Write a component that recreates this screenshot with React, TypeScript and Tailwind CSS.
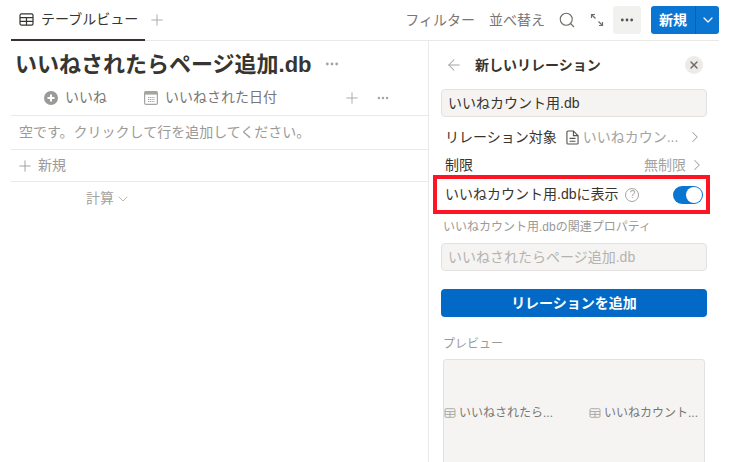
import { ArrowLeft, ChevronDown, ChevronRight, MoreHorizontal, Plus, Search, X } from "lucide-react";

const FONT = { fontFamily: '"Liberation Sans", "Noto Sans CJK JP", sans-serif' };

/* Notion's table icon */
function TableIcon({ className }: { className: string }) {
  return (
    <svg viewBox="0 0 16 14" fill="none" stroke="currentColor" strokeWidth="1.3" className={className}>
      <rect x="1" y="1" width="14" height="12" rx="1.5" />
      <path d="M1 5h14M1 9h14M8 5v8" />
    </svg>
  );
}

function ExpandIcon() {
  return (
    <svg viewBox="0 0 14 14" fill="none" stroke="#6f6e69" strokeWidth="1.2" className="w-[14px] h-[14px]">
      <path d="M1.5 5V1.5H5M1.5 1.5l4 4M12.5 9v3.5H9M12.5 12.5l-4-4" />
    </svg>
  );
}

function CalendarIcon() {
  return (
    <svg viewBox="0 0 14 14" className="w-[14px] h-[14px]">
      <rect x="0.6" y="0.6" width="12.8" height="12.8" rx="1.5" fill="none" stroke="#a5a4a0" strokeWidth="1.2" />
      <rect x="0.6" y="0.6" width="12.8" height="3" fill="#a5a4a0" />
      <path d="M4 6.5h6.5M4 8.5h6.5M4 10.5h6.5" stroke="#a5a4a0" strokeWidth="1" strokeDasharray="1.2 0.6" />
    </svg>
  );
}

function RollupIcon() {
  return (
    <svg viewBox="0 0 14 14" className="w-[14px] h-[14px]">
      <circle cx="7" cy="7" r="7" fill="#9b9a97" />
      <path d="M7 3.500v7M3.500 7h7" stroke="#fff" strokeWidth="2" />
    </svg>
  );
}

function PageIcon() {
  return (
    <svg viewBox="0 0 14 16" fill="none" stroke="#55534e" strokeWidth="1.2" className="w-[13px] h-[15px] shrink-0">
      <path d="M1 2.200C1 1.500 1.500 1 2.200 1H8l5 5v7.800c0 .7-.5 1.200-1.200 1.200H2.200C1.500 15 1 14.500 1 13.800V2.200Z" />
      <path d="M8 1v5h5M3.800 9h6.400M3.800 12h6.400" />
    </svg>
  );
}

function HeaderBar() {
  return (
    <div className="flex items-center justify-between h-[41px] w-[708px] ml-[11px] border-b border-[#e9e9e7]">
      <div className="flex items-center h-full">
        <div className="flex items-center gap-[7px] h-full w-[134px] pl-[8px] border-b-2 border-[#37322f] mb-[-1px] text-[14px] text-[#37352f]">
          <TableIcon className="w-[15px] h-[13px]" />
          <span>テーブルビュー</span>
        </div>
        <Plus className="w-[18px] h-[18px] ml-[3px] text-[#a5a4a0]" strokeWidth={1.2} />
      </div>
      <div className="flex items-center text-[14px] text-[#787774]">
        <span>フィルター</span>
        <span className="ml-[14px]">並べ替え</span>
        <Search className="w-[18px] h-[18px] ml-[13px] text-[#6f6e69]" strokeWidth={1.5} />
        <div className="ml-[14px]">
          <ExpandIcon />
        </div>
        <div className="flex items-center justify-center w-[28px] h-[28px] ml-[9px] rounded-[3px] bg-[#f1f1ef]">
          <MoreHorizontal className="w-[16px] h-[16px] text-[#55534e]" strokeWidth={2.2} />
        </div>
        <div className="flex items-center h-[28px] ml-[10px] rounded-[3px] bg-[#0a76d1] text-white">
          <span className="w-[45px] text-center text-[14px] font-bold border-r border-[#0762ae] leading-[28px]">新規</span>
          <div className="flex items-center justify-center w-[23px]">
            <ChevronDown className="w-[16px] h-[16px]" strokeWidth={1.8} />
          </div>
        </div>
      </div>
    </div>
  );
}

function TablePane() {
  return (
    <div className="w-[417px] h-full pt-[9px]">
      <div className="flex items-center pl-[4px] h-[28px]">
        <h1 className="text-[22px] font-bold text-[#37352f]">いいねされたらページ追加.db</h1>
        <MoreHorizontal className="w-[16px] h-[16px] ml-[12px] text-[#a5a4a0]" strokeWidth={2.2} />
      </div>
      <div className="flex items-center h-[36px] mt-[2px] border-b border-[#e9e9e7] text-[14px] text-[#787774]">
        <div className="flex items-center w-[133px] pl-[33px] gap-[7px]">
          <RollupIcon />
          <span>いいね</span>
        </div>
        <div className="flex items-center gap-[7px]">
          <CalendarIcon />
          <span>いいねされた日付</span>
        </div>
        <Plus className="w-[18px] h-[18px] ml-[66px] text-[#a5a4a0]" strokeWidth={1.2} />
        <MoreHorizontal className="w-[14px] h-[14px] ml-[15px] text-[#a5a4a0]" strokeWidth={2.2} />
      </div>
      <div className="flex items-center h-[34px] pl-[8px] border-b border-[#e9e9e7] text-[14px] text-[#9b9a97]">
        空です。クリックして行を追加してください。
      </div>
      <div className="flex items-center h-[32px] pl-[5px] gap-[4px] border-b border-[#e9e9e7] text-[14px] text-[#9b9a97]">
        <Plus className="w-[18px] h-[18px]" strokeWidth={1.2} />
        <span>新規</span>
      </div>
      <div className="flex items-center h-[33px] pl-[75px] gap-[1px] text-[14px] text-[#a5a4a0]">
        <span>計算</span>
        <ChevronDown className="w-[16px] h-[16px]" strokeWidth={1.2} />
      </div>
    </div>
  );
}

function RelationPane() {
  return (
    <div className="w-[291px] h-[421px] overflow-hidden border-l border-[#e9e9e7] pl-[12px] pr-[12px]">
      <div className="flex items-center h-[48px] pl-[4px] pr-[4px]">
        <ArrowLeft className="w-[18px] h-[18px] text-[#a5a4a0]" strokeWidth={1.4} />
        <span className="ml-[12px] text-[14px] font-bold text-[#37352f]">新しいリレーション</span>
        <div className="ml-auto flex items-center justify-center w-[18px] h-[18px] rounded-full bg-[#ecebe9]">
          <X className="w-[12px] h-[12px] text-[#6f6e69]" strokeWidth={3} />
        </div>
      </div>
      <div className="flex items-center h-[28px] pl-[6px] w-[266px] rounded-[4px] border border-[#e3e2e0] bg-[#f5f4f2] text-[14px] text-[#37352f]">
        いいねカウント用.db
      </div>
      <div className="flex items-center h-[28px] mt-[6px] pl-[4px] text-[14px] text-[#37352f]">
        <span>リレーション対象</span>
        <span className="ml-[9px]">
          <PageIcon />
        </span>
        <span className="ml-[4px] text-[#a5a4a0]">いいねカウン...</span>
        <ChevronRight className="w-[18px] h-[18px] ml-[8px] text-[#a5a4a0]" strokeWidth={1.4} />
      </div>
      <div className="flex items-center justify-between h-[28px] w-[265px] pl-[4px] text-[14px] text-[#37352f]">
        <span>制限</span>
        <span className="flex items-center text-[#a5a4a0]">
          無制限
          <ChevronRight className="w-[18px] h-[18px] ml-[2px]" strokeWidth={1.4} />
        </span>
      </div>
      <div className="flex items-center h-[39px] w-[277px] ml-[-8px] mt-[-4px] pl-[8px] pr-[3px] border-[4px] border-[#ff1424] text-[14px] text-[#37352f]">
        <span>いいねカウント用.dbに表示</span>
        <span className="flex items-center justify-center w-[14px] h-[14px] ml-[7px] rounded-full border border-[#a5a4a0] text-[10px] leading-none text-[#a5a4a0]">?</span>
        <div className="ml-auto flex items-center justify-end w-[30px] h-[18px] rounded-full bg-[#0a76d1] pr-[1px]">
          <div className="w-[16px] h-[16px] rounded-full bg-white"></div>
        </div>
      </div>
      <p className="mt-[4px] pl-[2px] h-[18px] text-[12px] leading-[18px] text-[#9b9a97]">いいねカウント用.dbの関連プロパティ</p>
      <div className="flex items-center h-[28px] w-[266px] mt-[7px] pl-[6px] rounded-[4px] border border-[#e3e2e0] bg-[#f5f4f2] text-[14px] text-[#b4b3af]">
        いいねされたらページ追加.db
      </div>
      <div className="flex items-center justify-center h-[28px] w-[266px] mt-[18px] rounded-[4px] bg-[#0369c6] text-[14px] font-bold text-white">
        リレーションを追加
      </div>
      <p className="mt-[18px] pl-[2px] h-[18px] text-[12px] leading-[18px] text-[#9b9a97]">プレビュー</p>
      <div className="flex items-center justify-between w-[262px] h-[160px] mt-[6px] ml-[2px] mb-[-100px] rounded-t-[3px] border border-[#e3e2e0] bg-[#f5f4f2] text-[12px] text-[#787774]">
        <div className="flex items-center gap-[3px] mt-[-52px]">
          <TableIcon className="w-[12px] h-[10px] text-[#a5a4a0]" />
          <span>いいねされたら...</span>
        </div>
        <div className="flex items-center gap-[3px] mt-[-52px] pr-[6px]">
          <TableIcon className="w-[12px] h-[10px] text-[#a5a4a0]" />
          <span>いいねカウント...</span>
        </div>
      </div>
    </div>
  );
}

export default function App() {
  return (
    <div className="w-[747px] h-[462px] overflow-hidden bg-white" style={FONT}>
      <HeaderBar />
      <div className="flex w-[708px] ml-[11px] h-[421px]">
        <TablePane />
        <RelationPane />
      </div>
    </div>
  );
}
